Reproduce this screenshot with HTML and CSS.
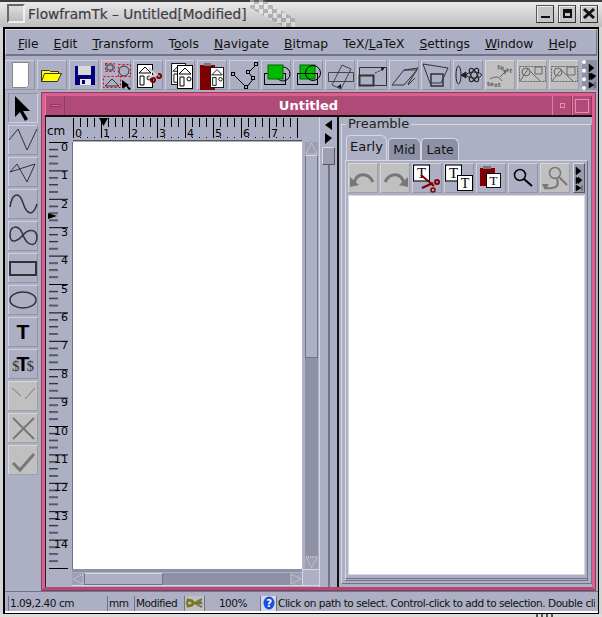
FILE: index.html
```html
<!DOCTYPE html>
<html lang="en">
<head>
  <meta charset="UTF-8">
  <title>FlowframTk</title>
  <link rel="stylesheet" href="styles.css">
</head>
<body>
  <svg class="defs" width="0" height="0">
    <defs>
      <symbol id="house" viewBox="0 0 16 24">
        <rect x="0.5" y="0.5" width="15" height="23" fill="#fff" stroke="#000"/>
        <path d="M2 9 8 3l6 6zM3 12h4v9H3z" fill="#fff" stroke="#000"/>
        <circle cx="12" cy="14" r="2" fill="#fff" stroke="#000"/>
      </symbol>
      <symbol id="tdoc" viewBox="0 0 16 16">
        <rect x="0.5" y="0.5" width="15" height="15" fill="#fff" stroke="#000" stroke-width="1"/>
        <text x="8" y="13" text-anchor="middle" class="serif-t">T</text>
      </symbol>
      <pattern id="hticks" width="28" height="20" patternUnits="userSpaceOnUse">
        <path d="M.5 0v20M7.5 0v10M14.5 0v10M21.5 0v10" stroke="#000" fill="none"/>
      </pattern>
      <pattern id="vticks" width="24" height="28.4" patternUnits="userSpaceOnUse">
        <path d="M2 .5h19M2 7.5h9M2 14.5h9M2 21.5h9" stroke="#000" fill="none"/>
      </pattern>
    </defs>
  </svg>

  <header class="titlebar">
    <span class="app-icon"></span>
    <span class="title-text">FlowframTk – Untitled[Modified]</span>
    <span class="pixels"></span>
    <div class="wm-buttons">
      <button class="wm-btn"><svg width="15" height="15"><path d="M3 10h9v2H3z" fill="#111"/></svg></button>
      <button class="wm-btn"><svg width="15" height="15"><path d="M3 3h9v9H3zM5 7v3h5V7z" fill="#111" fill-rule="evenodd"/></svg></button>
      <button class="wm-btn"><svg width="16" height="15"><path d="M3 3l10 9M13 3 3 12" stroke="#111" stroke-width="3" fill="none"/></svg></button>
    </div>
  </header>

  <div class="app">
    <nav class="menubar">
      <span><u>F</u>ile</span>
      <span><u>E</u>dit</span>
      <span><u>T</u>ransform</span>
      <span>T<u>o</u>ols</span>
      <span><u>N</u>avigate</span>
      <span><u>B</u>itmap</span>
      <span>TeX/<u>L</u>aTeX</span>
      <span><u>S</u>ettings</span>
      <span><u>W</u>indow</span>
      <span><u>H</u>elp</span>
    </nav>

    <div class="toolbar">
      <button class="tool"><svg viewBox="0 0 28 28"><path d="M6.500 1.500h16v23l-2 2h-14z" fill="#fff" stroke="#888"/></svg></button>
      <button class="tool"><svg viewBox="0 0 28 28"><path d="M3.500 9.500h8l1 1h8v2h3l-4 8h-16z" fill="#ff0" stroke="#333"/><path d="M3.500 20.500l3-8h16" fill="none" stroke="#333"/></svg></button>
      <button class="tool"><svg viewBox="0 0 28 28"><path d="M5 5h20v19H5z" fill="#00007e"/><path d="M8 5h13v9H8z" fill="#d8d8d8"/><path d="M10 18h11v6H10z" fill="#e8e8e8"/><path d="M12 19h3v4h-3z" fill="#00007e"/></svg></button>
      <button class="tool"><svg viewBox="0 0 28 28">
        <g fill="none" stroke="#e00" stroke-dasharray="2 2"><path d="M3.500 2.500h9v8h-9zM16.500 3.500h12v12h-12zM1.500 15.500h17v11h-17z"/></g>
        <rect x="5" y="4" width="6" height="5" fill="none" stroke="#333"/><circle cx="22" cy="10" r="5" fill="none" stroke="#333"/><path d="M3 25l7-7 7 7z" fill="none" stroke="#333"/>
        <path d="M20 19l9 9-2 1-3-4-3 3z" fill="#000"/><path d="M20 19v8l7-3z" fill="#000"/></svg></button>
      <button class="tool"><svg viewBox="0 0 28 28"><use href="#house" x="3" y="3" width="16" height="24"/><g fill="none" stroke="#7e0000" stroke-width="2"><circle cx="25" cy="15" r="2"/><circle cx="19" cy="19" r="2"/></g><path d="M15 7l8 8M24 13l-10 4" stroke="#ccc" stroke-width="2"/></svg></button>
      <button class="tool"><svg viewBox="0 0 28 28"><use href="#house" x="5" y="2" width="15" height="22"/><use href="#house" x="11" y="4" width="16" height="24"/></svg></button>
      <button class="tool"><svg viewBox="0 0 28 28"><path d="M2 4h15v25H2z" fill="#7e0000"/><path d="M6 2h7v3H6z" fill="#777"/><use href="#house" x="12" y="6" width="14" height="21"/></svg></button>
      <button class="tool"><svg viewBox="0 0 28 28"><path d="M3.500 13.500l13 13 7-9-5-6 8-8" fill="none" stroke="#000"/><g fill="#adb0c4" stroke="#000"><rect x="1.500" y="11.500" width="3" height="3"/><rect x="14.500" y="24.500" width="3" height="3"/><rect x="21.500" y="15.500" width="3" height="3"/><rect x="16.500" y="9.500" width="3" height="3"/><rect x="24.500" y="1.500" width="3" height="3"/></g></svg></button>
      <button class="tool"><svg viewBox="0 0 28 28"><circle cx="21" cy="13" r="7" fill="none" stroke="#000"/><rect x="2.500" y="12.500" width="21" height="11" fill="none" stroke="#000"/><rect x="6" y="4" width="15" height="14" fill="#0b0" stroke="#060"/></svg></button>
      <button class="tool"><svg viewBox="0 0 28 28"><rect x="6" y="4" width="15" height="14" fill="#0b0" stroke="#060"/><rect x="3.500" y="12.500" width="20" height="11" fill="none" stroke="#000"/><circle cx="19" cy="12" r="7.500" fill="none" stroke="#000"/></svg></button>
      <button class="tool"><svg viewBox="0 0 28 28"><g fill="none" stroke="#444"><path d="M2.500 11.500h25v9h-25z"/><path d="M16 4l9 4-10 20-9-4z"/></g><path d="M15 27l-4-1 4-3z" fill="#111"/></svg></button>
      <button class="tool"><svg viewBox="0 0 28 28"><g fill="none" stroke="#333"><path d="M1.500 6.500h27v18h-27z"/><path d="M1.500 14.500h14v10h-14z" stroke-width="2"/><path d="M17 12l9-4" stroke-dasharray="2 1"/></g><path d="M27 6l-4 1 1 3z" fill="#111"/></svg></button>
      <button class="tool"><svg viewBox="0 0 28 28"><g fill="none" stroke="#333"><path d="M2 24 14 9h13l-13 15zM14 9l14-2-10 16"/><path d="M18 24l7-7"/></g></svg></button>
      <button class="tool"><svg viewBox="0 0 28 28"><g fill="none" stroke="#333"><path d="M1 3l7 19h11l7-15z"/><path d="M9 13h12v12H9z" stroke-width="1.500"/></g></svg></button>
      <button class="tool"><svg viewBox="0 0 28 28"><g fill="none" stroke="#222"><ellipse cx="4.500" cy="14" rx="2.500" ry="9"/><path d="M7 14l5-3v6z" fill="#222"/><ellipse cx="20" cy="14" rx="7.500" ry="3"/><ellipse cx="20" cy="14" rx="7.500" ry="3" transform="rotate(60 20 14)"/><ellipse cx="20" cy="14" rx="7.500" ry="3" transform="rotate(120 20 14)"/></g></svg></button>
      <button class="tool off"><svg viewBox="0 0 28 28"><g fill="#666" font-family="'DejaVu Sans'" font-size="6" font-weight="bold"><text x="11" y="8" transform="rotate(10 11 8)">te</text><text x="19" y="10" transform="rotate(20 19 10)">xt</text><text x="1" y="25">te</text><text x="8" y="26">xt</text></g><path d="M4 18q8-5 12 2" fill="none" stroke="#666"/><path d="M14 16l7-7" stroke="#666"/><path d="M17 9l4 0-2 5z" fill="#666"/></svg></button>
      <button class="tool off"><svg viewBox="0 0 28 28"><g fill="none" stroke="#666"><path d="M1.500 5.500h26v15h-26z" stroke-dasharray="2 1"/><path d="M2 20 10 8l12 12"/><circle cx="8" cy="11" r="4"/><path d="M17 6h7v7h-7z"/></g></svg></button>
      <button class="tool off"><svg viewBox="0 0 28 28"><g fill="none" stroke="#666"><path d="M1.500 5.500h26v15h-26z" stroke-dasharray="2 1"/><path d="M2 20 11 9l12 11"/><circle cx="8" cy="11" r="4"/><path d="M17 6h8v8h-8z"/></g></svg></button>
      <div class="more more-top">
        <svg width="10" height="28"><path d="M2 3l5 4-5 4zM2 12l5 3-5 4zM4 12l5 3-5 4zM2 21l5 3-5 3zM8 21v6" fill="#000" stroke="#000" stroke-width=".5"/></svg>
      </div>
    </div>

    <main class="main">
      <aside class="sidebar">
        <button class="tool side pressed"><svg viewBox="0 0 28 28"><path d="M6 2v21l5-5 5 9 3-2-5-8h7z" fill="#000"/></svg></button>
        <button class="tool side"><svg viewBox="0 0 28 28"><path d="M0 14 9 3l9 21L28 3" fill="none" stroke="#333"/></svg></button>
        <button class="tool side"><svg viewBox="0 0 28 28"><path d="M1 14 26 6 18 24 8 6z" fill="none" stroke="#333"/></svg></button>
        <button class="tool side"><svg viewBox="0 0 28 28"><path d="M1 17C3 3 10 1 14 13s10 14 14 1" fill="none" stroke="#333" stroke-width="1.500"/></svg></button>
        <button class="tool side"><svg viewBox="0 0 28 28"><path d="M1 13C1 3 10 2 14 13s13 13 14 3C28 6 19 7 14 13S1 23 1 13z" fill="none" stroke="#333" stroke-width="1.500"/></svg></button>
        <button class="tool side"><svg viewBox="0 0 28 28"><rect x="1" y="8" width="26" height="13" fill="none" stroke="#333" stroke-width="2"/></svg></button>
        <button class="tool side"><svg viewBox="0 0 28 28"><ellipse cx="14" cy="14" rx="13" ry="8" fill="none" stroke="#333" stroke-width="1.500"/></svg></button>
        <button class="tool side"><span class="big-t">T</span></button>
        <button class="tool side"><span class="math-t">$<b>T</b>$</span></button>
        <button class="tool side off"><svg viewBox="0 0 28 28"><path d="M3 6l9 8M26 6 16 17" fill="none" stroke="#777"/></svg></button>
        <button class="tool side off"><svg viewBox="0 0 28 28"><path d="M4 4l21 21M25 4 4 25" fill="none" stroke="#777" stroke-width="2"/></svg></button>
        <button class="tool side off"><svg viewBox="0 0 28 28"><path d="M4 17l7 7L25 8" fill="none" stroke="#777" stroke-width="3"/></svg></button>
      </aside>

      <section class="inner">
        <div class="inner-title">
          <span class="inner-btn"><i class="dash"></i></span>
          <span class="inner-name">Untitled</span>
          <span class="inner-btn"><i class="dot"></i></span>
          <span class="inner-btn"><i class="box"></i></span>
        </div>
        <div class="inner-body">
          <div class="canvas-area">
            <div class="corner">cm</div>
            <svg class="hruler" width="229" height="24">
              <rect x="0" y="1" width="229" height="20" fill="url(#hticks)"/>
              <path d="M26 1h9l-4.500 8z" fill="#000"/>
              <g class="ruler-text">
                <text x="2" y="20">0</text><text x="30" y="20">1</text><text x="58" y="20">2</text>
                <text x="86" y="20">3</text><text x="114" y="20">4</text><text x="142" y="20">5</text>
                <text x="170" y="20">6</text><text x="198" y="20">7</text>
              </g>
            </svg>
            <div class="scroll-v">
              <span class="arrow-btn"><svg width="13" height="13"><path d="M6.500 1 12 12H1z" fill="none" stroke="#ddd" stroke-dasharray="1 1"/></svg></span>
              <span class="thumb-v"></span>
              <span class="trough"></span>
              <span class="arrow-btn"><svg width="13" height="13"><path d="M1 1h11L6.500 12z" fill="none" stroke="#ddd" stroke-dasharray="1 1"/></svg></span>
            </div>
            <svg class="vruler" width="25" height="427">
              <rect x="0" y="0" width="24" height="427" fill="url(#vticks)"/>
              <path d="M1 71l9 3-9 3z" fill="#000"/>
              <g class="ruler-text" text-anchor="end">
                <text x="21" y="9">0</text><text x="21" y="37">1</text><text x="21" y="66">2</text>
                <text x="21" y="94">3</text><text x="21" y="122">4</text><text x="21" y="151">5</text>
                <text x="21" y="179">6</text><text x="21" y="207">7</text><text x="21" y="236">8</text>
                <text x="21" y="264">9</text><text x="21" y="293">10</text><text x="21" y="321">11</text>
                <text x="21" y="349">12</text><text x="21" y="378">13</text><text x="21" y="406">14</text>
              </g>
            </svg>
            <div class="canvas"></div>
            <div class="corner-empty"></div>
            <div class="scroll-h">
              <span class="arrow-btn"><svg width="12" height="12"><path d="M1 6 11 1v10z" fill="none" stroke="#ddd" stroke-dasharray="1 1"/></svg></span>
              <span class="thumb-h"></span>
              <span class="trough"></span>
              <span class="arrow-btn"><svg width="12" height="12"><path d="M11 6 1 1v10z" fill="none" stroke="#ddd" stroke-dasharray="1 1"/></svg></span>
            </div>
            <div class="corner-box"></div>
          </div>

          <div class="splitter">
            <svg width="8" height="24"><path d="M7 0v10L0 5zM0 13l7 5-7 6z" fill="#000"/></svg>
            <span class="split-thumb"></span>
            <span class="split-line"></span>
          </div>

          <div class="side-panel">
            <fieldset class="preamble">
              <legend>Preamble</legend>
              <div class="tabs">
                <span class="tab active">Early</span>
                <span class="tab">Mid</span>
                <span class="tab">Late</span>
              </div>
              <div class="tab-panel">
                <div class="edit-tools">
                  <button class="tool off"><svg viewBox="0 0 28 28"><path d="M5 20C7 8 19 8 24 18" fill="none" stroke="#777" stroke-width="3"/><path d="M1 13l9 8-9 2z" fill="#777"/></svg></button>
                  <button class="tool off"><svg viewBox="0 0 28 28"><path d="M23 20C21 8 9 8 4 18" fill="none" stroke="#777" stroke-width="3"/><path d="M27 13l-9 8 9 2z" fill="#777"/></svg></button>
                  <button class="tool"><svg viewBox="0 0 28 28"><use href="#tdoc" x="0" y="0" width="17" height="18"/><g fill="none" stroke="#7e0000" stroke-width="2"><path d="M8 11l13 11M9 24l11-5"/><circle cx="24" cy="18" r="2"/><circle cx="20" cy="26" r="2" stroke-width="1.500"/></g></svg></button>
                  <button class="tool"><svg viewBox="0 0 28 28"><use href="#tdoc" x="0" y="0" width="17" height="18"/><use href="#tdoc" x="12" y="10" width="16" height="18"/></svg></button>
                  <button class="tool"><svg viewBox="0 0 28 28"><path d="M3 4h15v18H3z" fill="#7e0000"/><path d="M6 2h8v3H6z" fill="#777"/><use href="#tdoc" x="9" y="9" width="15" height="15"/></svg></button>
                  <button class="tool"><svg viewBox="0 0 28 28"><circle cx="11" cy="11" r="5.500" fill="none" stroke="#000" stroke-width="1.500"/><path d="M15 15l8 7" stroke="#000" stroke-width="2"/></svg></button>
                  <button class="tool off"><svg viewBox="0 0 28 28"><circle cx="14" cy="9" r="5.500" fill="none" stroke="#777" stroke-width="1.500"/><path d="M18 13l8 8" stroke="#777" stroke-width="2"/><path d="M16 15q3 8-5 9t-7-2" fill="none" stroke="#777" stroke-width="2"/><path d="M1 20l7 0-4 6z" fill="#777"/></svg></button>
                  <div class="more more-edit">
                    <svg width="10" height="26"><path d="M2 2l5 4-5 4zM2 12l4 3-4 4zM4 12l4 3-4 4zM2 20l5 3-5 3zM8 20v6" fill="#000" stroke="#000" stroke-width=".5"/></svg>
                  </div>
                </div>
                <div class="text-area"></div>
              </div>
            </fieldset>
          </div>
        </div>
      </section>
    </main>

    <footer class="status">
      <span class="field coords">1.09,2.40 cm</span>
      <span class="field units">mm</span>
      <span class="field modified">Modified</span>
      <span class="field lock"><svg width="17" height="14"><path d="M1 3l15 8M1 11l15-8" stroke="#777" stroke-width="2"/><circle cx="4" cy="7" r="3" fill="none" stroke="#7a7a00" stroke-width="2"/><path d="M7 7h8l-2-3" fill="none" stroke="#7a7a00" stroke-width="2"/></svg></span>
      <span class="field zoom">100%</span>
      <span class="field help"><svg width="12" height="14"><ellipse cx="6" cy="7" rx="5.500" ry="6.500" fill="#1a4ee0"/><text x="6" y="11" text-anchor="middle" class="help-q">?</text></svg></span>
      <span class="field message">Click on path to select. Control-click to add to selection. Double cli</span>
    </footer>
  </div>
  <div class="bottom-edge"><span class="grips"></span></div>
</body>
</html>
```

FILE: styles.css
```css
* {
  box-sizing: border-box;
}

html, body {
  margin: 0;
  height: 617px;
  overflow: hidden;
}

body {
  width: 602px;
  background: #d4d4d4;
  font-family: "DejaVu Sans", sans-serif;
  font-size: 12px;
  color: #111;
}

.defs {
  display: block;
  height: 0;
}

button {
  font: inherit;
  padding: 0;
}

svg {
  display: block;
}

/* window manager title */
.titlebar {
  height: 27px;
  display: flex;
  align-items: center;
  padding: 0 4px 2px 7px;
  border-top: 2px solid #3c3c3c;
  background: linear-gradient(#e9e9e9, #bcbcbc);
  position: relative;
}

.app-icon {
  width: 18px;
  height: 19px;
  border: 2px solid #666;
  border-right-color: #eee;
  border-bottom-color: #eee;
  background: linear-gradient(#ddd, #bbb);
}

.title-text {
  margin-left: 3px;
  font-size: 13.700px;
  color: #3e3e3e;
  -webkit-text-stroke: 0.2px #3e3e3e;
}

.pixels {
  position: absolute;
  left: 250px;
  top: -2px;
  width: 45px;
  height: 27px;
  background: repeating-conic-gradient(#8a8a8a 0 25%, #ededed 0 50%) 0 0 / 9px 9px;
  clip-path: polygon(0 0, 30% 0, 100% 70%, 100% 100%, 75% 100%, 0 30%);
  opacity: .5;
}

.wm-buttons {
  margin-left: auto;
  display: flex;
  gap: 4px;
}

.wm-btn {
  width: 18px;
  height: 18px;
  display: flex;
  align-items: center;
  justify-content: center;
  background: #c4c4c4;
  border: 1px solid #555;
  border-right-color: #333;
  border-bottom-color: #333;
  box-shadow: inset 1px 1px 0 #eee;
}

.app {
  width: 596px;
  height: 587px;
  margin-left: 3px;
  border-top: 2px solid #000;
  border-left: 2px solid #000;
  border-right: 1px solid #000;
  border-bottom: 1px solid #000;
  background: #adb0c4;
  display: flex;
  flex-direction: column;
}

/* menu */
.menubar {
  height: 27px;
  margin: 0 1px 0 0;
  padding: 4px 0 0 12px;
  display: flex;
  align-items: center;
  gap: 15px;
  font-size: 12.300px;
  color: #111;
  border: 1px solid #d6d8e2;
  border-right-color: #70738a;
  border-bottom: 2px solid #70738a;
}

.menubar u {
  text-underline-offset: 1px;
}

/* toolbars */
.toolbar {
  height: 36px;
  padding: 4px 0 0 0;
  display: flex;
  gap: 2px;
}

.tool {
  width: 30px;
  height: 30px;
  padding: 0;
  flex: none;
  display: flex;
  align-items: center;
  justify-content: center;
  background: #adb0c4;
  border: 1px solid #cfd0da;
  border-right-color: #92949f;
  border-bottom-color: #92949f;
}

.tool svg {
  width: 28px;
  height: 28px;
  overflow: visible;
}

.tool.off {
  background: #c0c0c0;
  border-color: #d8d8d8 #a0a0a0 #a0a0a0 #d8d8d8;
}

.tool.pressed {
  border-color: #92949f #cfd0da #cfd0da #92949f;
}

.more {
  display: flex;
  align-items: center;
  justify-content: flex-end;
  background: #8e91a6;
}

.more-top {
  width: 15px;
  height: 30px;
  border-left: 4px dotted #fff;
  margin-left: 1px;
}

.more-edit {
  width: 12px;
  height: 30px;
  margin-left: 1px;
  background: #9a9cae;
  border: 1px solid #555;
  border-left-color: #ddd;
  border-top-color: #ddd;
}

.serif-t {
  font-family: "Liberation Serif", serif;
  font-size: 14px;
}

/* main row */
.main {
  flex: 1;
  min-height: 0;
  display: flex;
  gap: 3px;
  padding-left: 3px;
}

.sidebar {
  width: 30px;
  padding-top: 1px;
  display: flex;
  flex-direction: column;
  gap: 2px;
}

.big-t {
  font-size: 21px;
  font-weight: bold;
  font-family: "Liberation Sans", sans-serif;
  color: #000;
}

.math-t {
  font-family: "Liberation Serif", serif;
  font-size: 15px;
  color: #333;
}

.math-t b {
  font-family: "Liberation Sans", sans-serif;
  font-size: 21px;
  color: #000;
  margin: 0 -3px;
}

/* inner frame */
.inner {
  width: 555px;
  height: 499px;
  border: 4px solid #dd5f90;
  border-bottom-color: #b04a77;
  outline: 1px solid #8a3d5f;
  outline-offset: -1px;
  display: flex;
  flex-direction: column;
}

.inner-title {
  height: 21px;
  flex: none;
  display: flex;
  background: #b04a77;
  border-bottom: 2px solid #111;
  color: #fff;
}

.inner-name {
  flex: 1;
  text-align: center;
  font-weight: bold;
  font-size: 13px;
  line-height: 19px;
}

.inner-btn {
  width: 20px;
  display: flex;
  align-items: center;
  justify-content: center;
  border-left: 1px solid #e87aa6;
  border-right: 1px solid #8a3d5f;
}

.dash {
  width: 11px;
  height: 3px;
  background: #dd5f90;
  border: 1px solid #8a3d5f;
}

.dot {
  width: 5px;
  height: 5px;
  border: 1px solid #f08ab2;
}

.box {
  width: 14px;
  height: 14px;
  border: 1px solid #f08ab2;
}

.inner-body {
  flex: 1;
  min-height: 0;
  display: flex;
}

.canvas-area {
  display: grid;
  grid-template-columns: 26px 230px 18px;
  grid-template-rows: 25px 427px 17px;
  flex: none;
  border-left: 1px solid #222;
  width: 274px;
}

.corner {
  padding: 7px 0 0 1px;
  font-size: 12px;
  color: #000;
}

.hruler {
  grid-column: 2;
  margin-left: 1px;
  border-bottom: 1px solid #555;
}

.ruler-text {
  font-size: 11px;
  fill: #000;
}

.scroll-v {
  grid-column: 3;
  grid-row: 1 / 3;
  padding: 25px 1px 0 3px;
  display: flex;
  flex-direction: column;
  border-right: 1px solid #d6d8e2;
}

.vruler {
  grid-column: 1;
  grid-row: 2;
  margin-left: 1px;
}

.canvas {
  grid-column: 2;
  grid-row: 2;
  background: #fff;
  border-left: 1px solid #70738a;
}

.arrow-btn {
  flex: none;
  background: #9da0b4;
}

.thumb-v {
  height: 203px;
  flex: none;
  border: 1px solid #70738a;
  border-top-color: #d6d8e2;
  background: #adb0c4;
}

.thumb-h {
  width: 79px;
  flex: none;
  border: 1px solid #70738a;
  border-top-color: #d6d8e2;
  background: #adb0c4;
}

.trough {
  flex: 1;
  background: #8e91a6;
}

.corner-empty {
  grid-column: 1;
  grid-row: 3;
}

.scroll-h {
  grid-column: 2;
  grid-row: 3;
  display: flex;
  padding-top: 1px;
  border-top: 3px solid #8e91a6;
  border-bottom: 1px solid #d6d8e2;
}

.corner-box {
  grid-column: 3;
  grid-row: 3;
  background: #adb0c4;
  border: 1px solid #d6d8e2;
}

/* split pane divider */
.splitter {
  width: 20px;
  flex: none;
  padding-top: 3px;
  display: flex;
  flex-direction: column;
  align-items: center;
  border-right: 2px solid #111;
  border-left: 1px solid #d6d8e2;
}

.split-thumb {
  width: 13px;
  height: 18px;
  margin-top: 3px;
  flex: none;
  background: #9da0b4;
  border: 1px solid #555;
  border-top-color: #d6d8e2;
  border-left-color: #d6d8e2;
}

.split-line {
  flex: 1;
  width: 2px;
  background: #70738a;
}

/* preamble panel */
.side-panel {
  flex: 1;
  padding: 0 3px 3px 2px;
}

.preamble {
  margin: 0;
  height: 100%;
  padding: 4px 3px 4px 3px;
  min-inline-size: 0;
  border: 1px solid #d6d8e2;
  border-right-color: #70738a;
  border-bottom-color: #70738a;
}

.preamble legend {
  padding: 0 2px;
  margin-left: 1px;
  font-size: 13px;
  line-height: 14px;
  color: #222;
}

.tabs {
  display: flex;
  align-items: flex-end;
  height: 25px;
  margin-left: 1px;
}

.tab {
  height: 22px;
  padding: 3px 4.500px 0;
  font-size: 12.500px;
  color: #111;
  background: #8e91a6;
  border: 1px solid #d6d8e2;
  border-bottom: 0;
  border-radius: 4px 6px 0 0;
}

.tab.active {
  height: 25px;
  padding: 3px 3px 0;
  margin-right: 1px;
  background: #adb0c4;
  font-size: 13px;
}

.tab-panel {
  height: 421px;
  padding: 2px 2px 3px;
  display: flex;
  flex-direction: column;
  border: 1px solid #d6d8e2;
  border-right-color: #70738a;
  border-bottom: 3px double #70738a;
}

.edit-tools {
  display: flex;
  gap: 2px;
  height: 32px;
  flex: none;
  background: #adb0c4;
}

.text-area {
  flex: 1;
  background: #fff;
  border: 1px solid #d6d8e2;
}

/* status bar */
.status {
  height: 22px;
  flex: none;
  padding: 4px 2px 2px 3px;
  display: flex;
  border-top: 1px solid #70738a;
  background: linear-gradient(#adb0c4 0 19px, #fff 19px);
  font-size: 10.500px;
  letter-spacing: -.45px;
  color: #111;
  overflow: hidden;
}

.field {
  height: 15px;
  line-height: 14px;
  white-space: nowrap;
  overflow: hidden;
  flex: none;
  border-left: 1px solid #70738a;
  background: #adb0c4;
  padding-left: 1px;
}

.coords {
  width: 99px;
}

.units {
  width: 27px;
}

.modified {
  width: 50px;
}

.lock {
  width: 20px;
  background: #c0c0c0;
}

.zoom {
  width: 56px;
  text-align: center;
}

.help {
  width: 16px;
  display: flex;
  justify-content: center;
  background: #d6d8e2;
}

.help-q {
  fill: #fff;
  font-size: 10px;
  font-weight: bold;
}

.message {
  width: 319px;
}

.bottom-edge {
  height: 3px;
  background: #dcdcdc;
  position: relative;
}

.grips {
  position: absolute;
  left: 536px;
  top: 0;
  width: 18px;
  height: 3px;
  background: repeating-linear-gradient(90deg, #555 0 2px, #ddd 2px 5px);
}
```
